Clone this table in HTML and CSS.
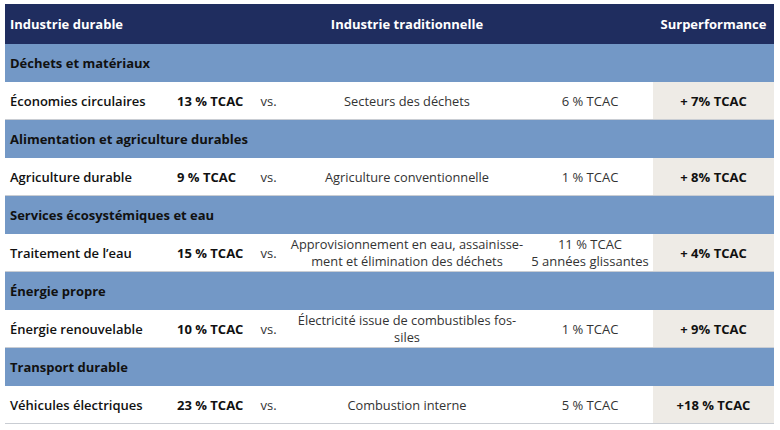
FILE: index.html
```html
<!DOCTYPE html>
<html lang="fr">
<head>
<meta charset="utf-8">
<link rel="stylesheet" href="styles.css">
</head>
<body>
<table class="grid">
  <colgroup>
    <col class="c1"><col class="c2"><col class="c3"><col class="c4"><col class="c5"><col class="c6">
  </colgroup>
  <thead>
    <tr class="head">
      <th class="left">Industrie durable</th>
      <th></th>
      <th></th>
      <th>Industrie traditionnelle</th>
      <th></th>
      <th>Surperformance</th>
    </tr>
  </thead>
  <tbody>
    <tr class="cat"><td colspan="6">Déchets et matériaux</td></tr>
    <tr class="row">
      <td class="name">Économies circulaires</td>
      <td class="val">13 % TCAC</td>
      <td class="vs">vs.</td>
      <td class="trad">Secteurs des déchets</td>
      <td class="tval">6 % TCAC</td>
      <td class="perf">+ 7% TCAC</td>
    </tr>
    <tr class="cat"><td colspan="6">Alimentation et agriculture durables</td></tr>
    <tr class="row">
      <td class="name">Agriculture durable</td>
      <td class="val">9 % TCAC</td>
      <td class="vs">vs.</td>
      <td class="trad">Agriculture conventionnelle</td>
      <td class="tval">1 % TCAC</td>
      <td class="perf">+ 8% TCAC</td>
    </tr>
    <tr class="cat"><td colspan="6">Services écosystémiques et eau</td></tr>
    <tr class="row">
      <td class="name">Traitement de l’eau</td>
      <td class="val">15 % TCAC</td>
      <td class="vs">vs.</td>
      <td class="trad">Approvisionnement en eau, assainisse-<br>ment et élimination des déchets</td>
      <td class="tval">11 % TCAC<br>5 années glissantes</td>
      <td class="perf">+ 4% TCAC</td>
    </tr>
    <tr class="cat"><td colspan="6">Énergie propre</td></tr>
    <tr class="row">
      <td class="name">Énergie renouvelable</td>
      <td class="val">10 % TCAC</td>
      <td class="vs">vs.</td>
      <td class="trad">Électricité issue de combustibles fos-<br>siles</td>
      <td class="tval">1 % TCAC</td>
      <td class="perf">+ 9% TCAC</td>
    </tr>
    <tr class="cat"><td colspan="6">Transport durable</td></tr>
    <tr class="row">
      <td class="name">Véhicules électriques</td>
      <td class="val">23 % TCAC</td>
      <td class="vs">vs.</td>
      <td class="trad">Combustion interne</td>
      <td class="tval">5 % TCAC</td>
      <td class="perf">+18 % TCAC</td>
    </tr>
  </tbody>
</table>
</body>
</html>
```
FILE: styles.css
```css
html, body {
  margin: 0;
  padding: 0;
  background: #ffffff;
}
body {
  padding: 4px 0 0 5px;
  font-family: "Open Sans", "Noto Sans", sans-serif;
  font-size: 13px;
  color: #2b2b2b;
}
.grid {
  border-collapse: collapse;
  table-layout: fixed;
  width: 769px;
}
.c1 { width: 167px; }
.c2 { width: 78px; }
.c3 { width: 37px; }
.c4 { width: 240px; }
.c5 { width: 126px; }
.c6 { width: 121px; }

.grid th, .grid td {
  padding: 0;
  vertical-align: middle;
  text-align: center;
  white-space: nowrap;
}
.head th {
  height: 40px;
  background: #1f2d5f;
  color: #ffffff;
  font-weight: 700;
}
.head th.left {
  text-align: left;
  padding-left: 5px;
}
.cat td {
  height: 38px;
  background: #7398c6;
  color: #111111;
  font-weight: 700;
  text-align: left;
  padding-left: 5px;
}
.row td {
  height: 36px;
  padding-top: 1px;
  border-bottom: 1px solid #c9cdd3;
  line-height: 17px;
  color: #333333;
}
.row td.trad {
  font-size: 12.8px;
}
.row td.name {
  text-align: left;
  padding-left: 5px;
  font-weight: 600;
  color: #111111;
}
.row td.val {
  text-align: left;
  padding-left: 5px;
  font-weight: 700;
  color: #111111;
}
.row td.perf {
  background: #eeebe6;
  font-weight: 700;
  color: #111111;
}
```
